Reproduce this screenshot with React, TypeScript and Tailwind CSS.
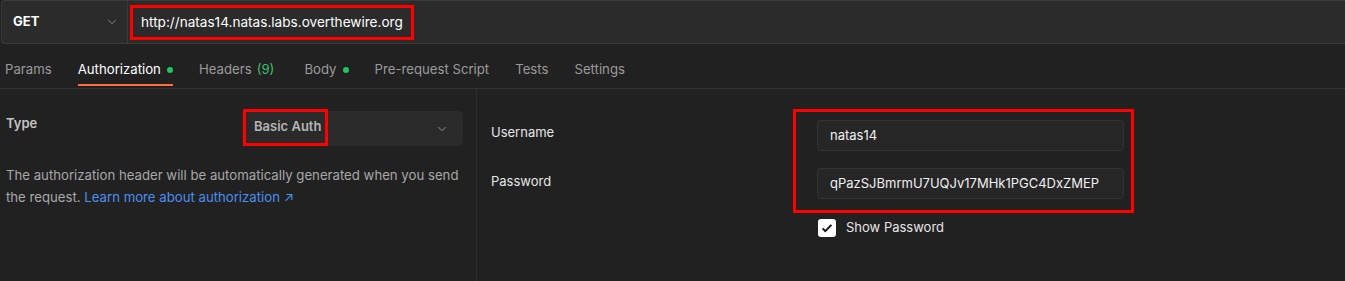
import React from "react";
import { ChevronDown } from "lucide-react";

const tabs = [
  { name: "Params" },
  { name: "Authorization", active: true, dot: true },
  { name: "Headers", count: "(9)" },
  { name: "Body", dot: true },
  { name: "Pre-request Script" },
  { name: "Tests" },
  { name: "Settings" },
];

const App = () => {
  return (
    <div
      className="w-[1345px] h-[281px] bg-[#212121] text-[13px] overflow-hidden flex flex-col"
      style={{ fontFamily: "Inter, 'Noto Sans', sans-serif" }}
    >
      {/* request bar */}
      <div className="h-[44px] ml-[1px] flex bg-[#2b2b2b] border border-[#3a3a3a] border-r-0 rounded-l-[4px] shrink-0">
        <div className="w-[126px] flex items-center justify-between pl-[11px] pr-[8px] border-r border-[#3a3a3a]">
          <span className="font-bold text-white">GET</span>
          <ChevronDown className="w-[14px] h-[14px] text-[#8a8a8a]" strokeWidth={1.5} />
        </div>
        <div className="flex items-center pl-[2px]">
          <div className="h-[35px] w-[284px] border-[3px] border-[#ff0000] flex items-center pl-[8px] text-white text-[13.6px]">
            http://natas14.natas.labs.overthewire.org
          </div>
        </div>
      </div>

      {/* tabs */}
      <div className="h-[45px] flex gap-[26px] pl-[5px] border-b border-[#333333] shrink-0 text-[13.2px]">
        {tabs.map((t) => (
          <div key={t.name} className={`flex flex-col pt-[16px] ${t.count ? "mr-[4px]" : ""}`}>
            <div className={`h-[20px] flex items-center ${t.active ? "text-white" : "text-[#9b9b9b]"}`}>
              {t.name}
              {t.count && <span className="ml-[5px] text-[#3fbf6f]">{t.count}</span>}
              {t.dot && <span className="ml-[6px] w-[6px] h-[6px] rounded-full bg-[#22c55e]" />}
            </div>
            <div className={`mt-[4px] h-[2px] ${t.active ? "bg-[#ff6c37]" : ""}`} />
          </div>
        ))}
      </div>

      <div className="flex flex-1">
        {/* left panel */}
        <div className="w-[477px] border-r border-[#2e2e2e] pl-[6px] pr-[13px] pt-[20px]">
          <div className="flex justify-between">
            <span className="mt-[5px] font-semibold text-[#c4c4c4]">Type</span>
            <div className="w-[221px] h-[35px] mt-[2px] bg-[#2a2a2a] rounded-[4px] flex items-center justify-between pr-[14px]">
              <div className="h-[37px] -mt-[3px] ml-[1px] w-[85px] border-[3px] border-[#ff0000] flex items-center pl-[8px] font-semibold text-[#b5b5b5]">
                Basic Auth
              </div>
              <ChevronDown className="w-[14px] h-[14px] text-[#9a9a9a]" strokeWidth={1.5} />
            </div>
          </div>
          <p className="mt-[18px] leading-[22px] text-[#a8a8a8] text-[13.2px]">
            The authorization header will be automatically generated when you send the request.{" "}
            <span className="text-[#4a8ff0]">Learn more about authorization ↗</span>
          </p>
        </div>

        {/* right panel */}
        <div className="flex pl-[14px] pt-[20px]">
          <div className="w-[302px] flex flex-col text-[#e6e6e6]">
            <span className="mt-[14px] h-[20px]">Username</span>
            <span className="mt-[29px] h-[20px]">Password</span>
          </div>
          <div className="flex flex-col">
            <div className="w-[341px] border-[3px] border-[#ff0000] pl-[21px] pr-[7px] pt-[8px] pb-[11px] flex flex-col gap-[17px]">
              <div className="h-[31px] bg-[#262626] border border-[#333333] rounded-[4px] flex items-center pl-[12px] text-[#f0f0f0]">
                natas14
              </div>
              <div className="h-[31px] bg-[#262626] border border-[#333333] rounded-[4px] flex items-center pl-[12px] text-[#f0f0f0]">
                qPazSJBmrmU7UQJv17MHk1PGC4DxZMEP
              </div>
            </div>
            <div className="flex items-center mt-[5px] ml-[25px]">
              <div className="w-[18px] h-[18px] bg-white rounded-[3px] flex items-center justify-center">
                <svg viewBox="0 0 16 16" className="w-[14px] h-[14px]">
                  <path d="M3 8.5l3 3 7-7" fill="none" stroke="#111" strokeWidth="2.2" />
                </svg>
              </div>
              <span className="ml-[10px] text-[#e6e6e6]">Show Password</span>
            </div>
          </div>
        </div>
      </div>
    </div>
  );
};

export default App;
